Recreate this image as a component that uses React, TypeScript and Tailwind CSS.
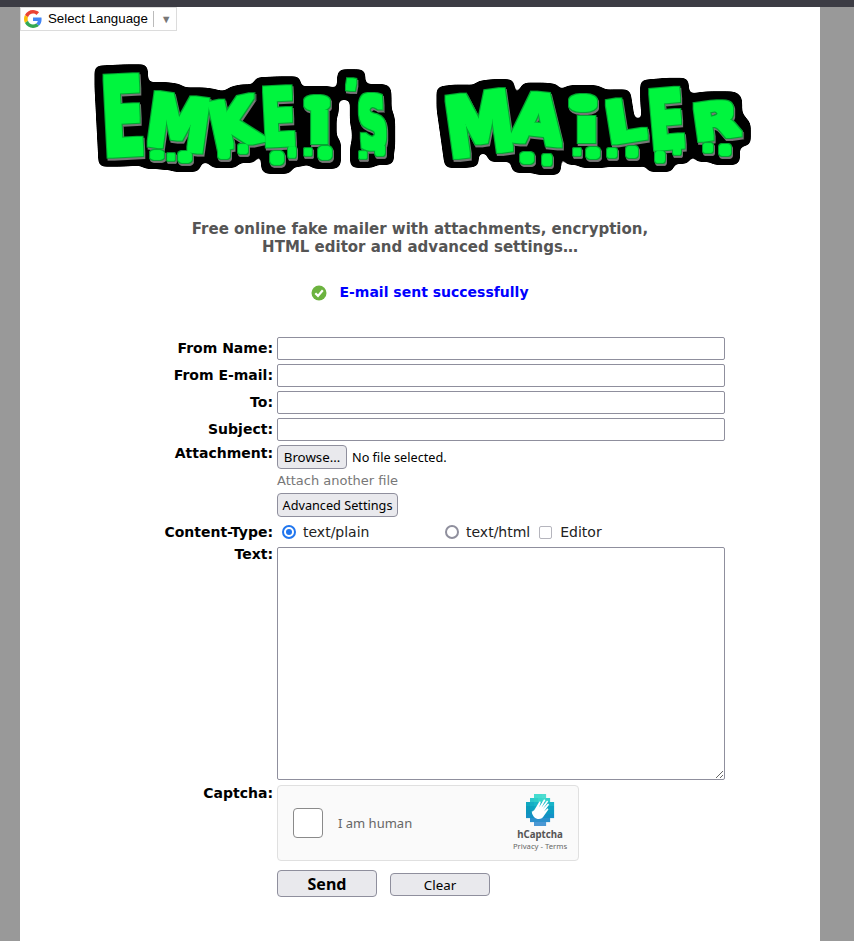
import React from 'react';

const sans = 'font-["DejaVu_Sans",sans-serif]';

// letter, left, top, right, bottom, rotation, glyph advance in em
const letters: [string, number, number, number, number, number, number][] = [
    ['E', 102, 76, 140, 155, -3, 0.62],
    ['M', 147, 96, 204, 148, 8, 0.9],
    ['K', 209, 100, 255, 146, -12, 0.72],
    ['E', 262, 88, 292, 145, -3, 0.62],
    ['I', 307, 112, 327, 142, 0, 0.3],
    ["'", 343, 80, 352, 102, 10, 0.2],
    ['S', 359, 96, 384, 148, -4, 0.66],
    ['M', 445, 94, 507, 154, -8, 0.9],
    ['A', 513, 94, 561, 143, 6, 0.74],
    ['I', 573, 118, 595, 141, 0, 0.3],
    ['L', 605, 100, 641, 141, -9, 0.58],
    ['E', 649, 90, 681, 148, -5, 0.62],
    ['R', 692, 103, 735, 138, -8, 0.7],
];

const dots: [number, number, number, number][] = [
    [157, 155, 5, 3], [171, 157, 2, 2], [185, 157, 5, 4], [224, 153, 4, 4], [243, 149, 3, 3],
    [277, 158, 5, 5], [292, 152, 2, 4], [308, 152, 2, 2], [325, 153, 5, 5], [363, 155, 2, 2], [380, 150, 3, 4],
    [527, 158, 5, 4], [547, 160, 3, 4], [577, 152, 2, 2], [593, 153, 5, 4], [612, 153, 3, 3], [632, 152, 4, 4],
    [660, 157, 3, 4], [677, 150, 2, 3], [708, 148, 3, 3], [725, 150, 4, 4],
    // the big i dots
    [317, 103, 11, 6], [583, 103, 12, 7],
];

const Logo = () => (
    <svg width="854" height="200" viewBox="0 40 854 200" className="block -ml-5" aria-label="Emkei's Mailer">
        <defs>
            <filter id="bubble" filterUnits="userSpaceOnUse" x="0" y="40" width="854" height="200" colorInterpolationFilters="sRGB">
                <feMorphology in="SourceAlpha" operator="dilate" radius="2.500" result="body" />
                {/* black outline */}
                <feMorphology in="SourceAlpha" operator="dilate" radius="10" result="fat" />
                <feGaussianBlur in="fat" stdDeviation="3" result="fatBlur" />
                <feComponentTransfer in="fatBlur" result="fatHard">
                    <feFuncA type="linear" slope="12" intercept="-4" />
                </feComponentTransfer>
                <feFlood floodColor="#000" />
                <feComposite in2="fatHard" operator="in" result="black" />
                {/* grey rim, shifted down right */}
                <feMorphology in="SourceAlpha" operator="dilate" radius="3" result="rim" />
                <feOffset in="rim" dx="1" dy="1.500" result="rimOff" />
                <feGaussianBlur in="rimOff" stdDeviation="0.700" result="rimBlur" />
                <feFlood floodColor="#777" />
                <feComposite in2="rimBlur" operator="in" result="grey" />
                {/* green with dark edge */}
                <feFlood floodColor="#00a830" />
                <feComposite in2="body" operator="in" result="edge" />
                <feMorphology in="SourceAlpha" operator="dilate" radius="2" result="inner" />
                <feOffset in="inner" dx="-0.500" dy="-0.500" result="innerOff" />
                <feGaussianBlur in="innerOff" stdDeviation="0.600" result="innerBlur" />
                <feFlood floodColor="#00f53e" />
                <feComposite in2="innerBlur" operator="in" result="brightRaw" />
                <feComposite in="brightRaw" in2="body" operator="in" result="bright" />
                <feMerge>
                    <feMergeNode in="black" />
                    <feMergeNode in="grey" />
                    <feMergeNode in="edge" />
                    <feMergeNode in="bright" />
                </feMerge>
            </filter>
        </defs>
        <g filter="url(#bubble)" fill="#000">
            {letters.map(([ch, x0, y0, x1, y1, rot, adv], i) => {
                const size = (y1 - y0) / 0.729;
                const sx = (x1 - x0) / (adv * size);
                return (
                    <text
                        key={i}
                        transform={`rotate(${rot} ${(x0 + x1) / 2} ${(y0 + y1) / 2}) translate(${x0} ${y1}) scale(${sx} 1)`}
                        fontFamily="DejaVu Sans"
                        fontWeight="bold"
                        fontSize={size}
                    >
                        {ch}
                    </text>
                );
            })}
            {dots.map(([cx, cy, rx, ry], i) => (
                <ellipse key={i} cx={cx} cy={cy} rx={rx} ry={ry} />
            ))}
        </g>
    </svg>
);

const GoogleG = () => (
    <svg width="18" height="18" viewBox="0 0 48 48">
        <path fill="#EA4335" d="M24 9.500c3.500 0 6.700 1.200 9.200 3.600l6.900-6.900C35.900 2.400 30.500 0 24 0 14.600 0 6.500 5.400 2.600 13.200l8 6.200C12.500 13.700 17.800 9.500 24 9.500z" />
        <path fill="#4285F4" d="M46.900 24.500c0-1.600-.1-3.100-.4-4.500H24v9h12.900c-.6 3-2.200 5.500-4.700 7.200l7.700 6c4.500-4.200 7-10.300 7-17.700z" />
        <path fill="#FBBC05" d="M10.500 28.600c-.5-1.400-.8-3-.8-4.600s.3-3.200.8-4.600l-8-6.200C.9 16.500 0 20.100 0 24s.9 7.500 2.600 10.800l7.900-6.200z" />
        <path fill="#34A853" d="M24 48c6.500 0 11.900-2.100 15.900-5.800l-7.700-6c-2.200 1.400-4.900 2.300-8.200 2.300-6.200 0-11.500-4.200-13.400-9.900l-8 6.200C6.500 42.600 14.600 48 24 48z" />
    </svg>
);

const HCaptchaLogo = () => {
    const rows: [number, string[]][] = [
        [2, ['#45dcd0', '#45dcd0', '#4fdcd0']],
        [1, ['#2cc8cc', '#2fcfc8', '#38d6cc', '#3cd8cc', '#34d0cc']],
        [0, ['#10a8c0', '#14b0c4', '#18b8c8', '#1cbcc8', '#1cbcc8', '#1cb8c8', '#18b4c8']],
        [0, ['#0c9cbc', '#0ca4c0', '#10a8c0', '#10acc4', '#10acc4', '#10a8c4', '#10a4c4']],
        [0, ['#0c94bc', '#0c98bc', '#0c9cc0', '#0c9cc0', '#0c9cc0', '#0c9cc0', '#0c9cc4']],
        [0, ['#1490c4', '#1490c4', '#1490c4', '#1490c4', '#1490c4', '#1490c4', '#1490c8']],
        [1, ['#2c90cc', '#2c90cc', '#2c90cc', '#2c90cc', '#2c90cc']],
        [2, ['#4a98d4', '#4a98d4', '#4a98d4']],
    ];
    return (
        <svg width="32" height="32" viewBox="0 0 32 32">
            {rows.map(([start, colors], y) =>
                colors.map((c, x) => (
                    <rect key={`${x}-${y}`} x={2 + (start + x) * 4} y={y * 4} width="4.100" height="4.100" fill={c} />
                ))
            )}
            <path
                fill="#fff"
                d="M8 16.500c-.8 2.800 1.500 6.800 4.300 8 3 1.200 6.200.2 7.500-2.500l4.400-6.300c.5-.8-.5-1.600-1.200-1l-3 2.700 4.800-6.300c.6-.9-.6-1.800-1.300-1l-4.600 5 5-7c.6-.9-.7-1.800-1.400-.9l-5 6.300 3.600-6.700c.5-1-.9-1.700-1.500-.8l-4.500 7.300 1.600-4.800c.3-1-1.100-1.500-1.600-.6-1.500 2.800-3.400 5.700-5.100 8.700-.6 0-1.600.5-1 1.700z"
            />
        </svg>
    );
};

const Row = ({ label, labelClass = '', children, className = '' }: {
    label?: string;
    labelClass?: string;
    children: React.ReactNode;
    className?: string;
}) => (
    <div className={`flex gap-1 ${className}`}>
        <div className={`w-[253px] shrink-0 text-right text-[14px] leading-[17px] font-bold text-black ${sans} ${labelClass}`}>
            {label}
        </div>
        <div className="w-[448px]">{children}</div>
    </div>
);

const TextRow = ({ label }: { label: string }) => (
    <Row label={label} labelClass="pt-[3px]" className="mb-1">
        <input type="text" className="block h-[23px] w-full rounded-[2px] border border-[#8f8f9d] bg-white" />
    </Row>
);

const btn = 'rounded-[4px] border border-[#8f8f9d] bg-[#e9e9ed] text-black font-["Noto_Sans",sans-serif]';

export default function App() {
    return (
        <div className="min-h-[941px] overflow-hidden bg-[#999999]">
            <div className="h-[7px] bg-[#3c3c44]" />
            <div className="relative ml-5 h-[934px] w-[800px] bg-white">
                <div className="absolute left-0 top-0 flex h-6 w-[157px] items-center border border-[#dcdcdc] bg-white pl-[3px] font-['Liberation_Sans',sans-serif] text-[13.300px] text-black">
                    <GoogleG />
                    <span className="ml-[6px]">Select Language</span>
                    <span className="ml-[5px] h-4 border-l border-[#bbbbbb]" />
                    <span className="ml-[7px] text-[11px] text-[#777777]">▼</span>
                </div>

                <div className="pt-[33px]">
                    <Logo />
                </div>

                <p className={`mt-[-20px] text-center text-[15px] leading-[18px] font-bold text-[#555555] ${sans}`}>
                    Free online fake mailer with attachments, encryption,
                    <br />
                    HTML editor and advanced settings…
                </p>

                <div className="mt-[27px] flex h-[20px] items-center justify-center">
                    <svg width="16" height="16" viewBox="0 0 16 16" className="mr-[12px]">
                        <circle cx="8" cy="8" r="7.500" fill="#6cb33f" />
                        <path d="M4.300 8.200l2.700 2.700 4.800-5.600" fill="none" stroke="#fff" strokeWidth="2.200" />
                    </svg>
                    <span className={`pb-[2px] text-[14px] font-bold text-[#0000ff] ${sans}`}>E-mail sent successfully</span>
                </div>

                <div className="mt-[34px]">
                    <TextRow label="From Name:" />
                    <TextRow label="From E-mail:" />
                    <TextRow label="To:" />
                    <TextRow label="Subject:" />

                    <Row label="Attachment:">
                        <div className="flex h-6 items-center font-['Noto_Sans',sans-serif] text-[12.700px] text-black">
                            <span className={`flex h-6 w-[70px] items-center justify-center pt-[2px] text-[13.300px] ${btn}`}>Browse…</span>
                            <span className="ml-[5px] pt-[2px]">No file selected.</span>
                        </div>
                        <div className={`mt-[3px] h-[21px] text-[13px] leading-[17px] text-[#777777] ${sans}`}>Attach another file</div>
                        <span className={`flex h-6 w-[121px] items-center justify-center pt-[2px] text-[12.700px] ${btn}`}>Advanced Settings</span>
                    </Row>

                    <Row label="Content-Type:" className="mt-[3px] h-[24px] items-center">
                        <div className="flex items-center text-[14px] text-[#222222]">
                            <span className="ml-[5px] flex h-[14px] w-[14px] items-center justify-center rounded-full border-2 border-[#2176ee]">
                                <span className="h-[6px] w-[6px] rounded-full bg-[#2176ee]" />
                            </span>
                            <span className={`ml-[7px] w-[142px] ${sans}`}>text/plain</span>
                            <span className="h-[14px] w-[14px] rounded-full border-2 border-[#8f8f9d]" />
                            <span className={`ml-[7px] ${sans}`}>text/html</span>
                            <span className="ml-[9px] h-[13px] w-[13px] rounded-[2px] border border-[#b5b5bd]" />
                            <span className={`ml-[8px] ${sans}`}>Editor</span>
                        </div>
                    </Row>

                    <Row label="Text:" labelClass="-mt-px" className="mt-[3px]">
                        <textarea className="block h-[233px] w-full rounded-[2px] border border-[#8f8f9d] bg-white" />
                    </Row>

                    <Row label="Captcha:" className="mt-[5px]">
                        <div className="flex h-[76px] w-[302px] items-center rounded-[4px] border border-[#e0e0e0] bg-[#fafafa] font-['Noto_Sans',sans-serif]">
                            <span className="ml-[15px] h-[30px] w-[30px] rounded-[4px] border border-[#8a8a8a] bg-white" />
                            <span className="ml-[15px] pt-[2px] text-[13px] text-[#666666]">I am human</span>
                            <div className="ml-auto mr-[10px] flex w-[56px] flex-col items-center">
                                <HCaptchaLogo />
                                <span className="mt-[2px] text-[9.700px] leading-[13px] font-bold whitespace-nowrap text-[#555555]">hCaptcha</span>
                                <span className="text-[7.700px] leading-[11px] whitespace-nowrap text-[#666666]">Privacy - Terms</span>
                            </div>
                        </div>
                    </Row>

                    <Row className="mt-[9px]">
                        <div className="flex items-center">
                            <span className={`flex h-[27px] w-[100px] items-center justify-center text-[16px] font-bold ${btn}`}>Send</span>
                            <span className={`mt-[2px] ml-[13px] flex h-[23px] w-[100px] items-center justify-center pt-[2px] text-[13.333px] ${btn}`}>Clear</span>
                        </div>
                    </Row>
                </div>
            </div>
        </div>
    );
}
